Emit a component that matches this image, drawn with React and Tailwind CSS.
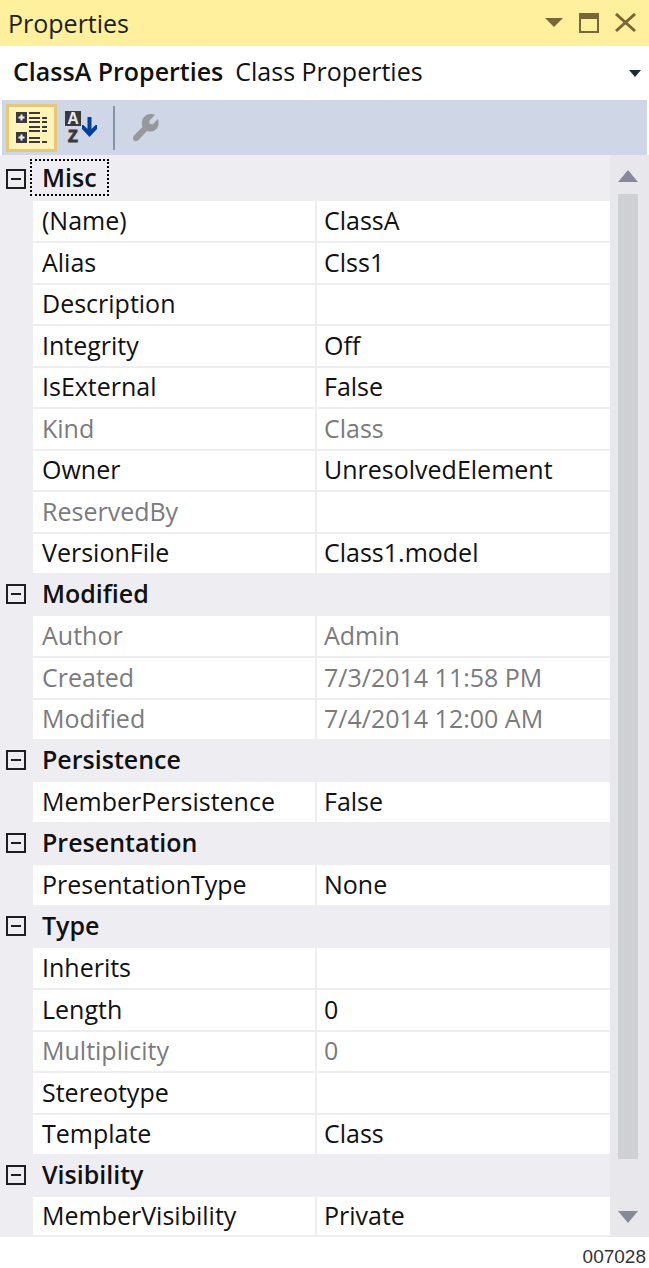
import React, { useState } from 'react';

const groups = [
  {
    name: 'Misc',
    items: [
      { name: '(Name)', value: 'ClassA' },
      { name: 'Alias', value: 'Clss1' },
      { name: 'Description', value: '' },
      { name: 'Integrity', value: 'Off' },
      { name: 'IsExternal', value: 'False' },
      { name: 'Kind', value: 'Class', readOnly: true },
      { name: 'Owner', value: 'UnresolvedElement' },
      { name: 'ReservedBy', value: '', readOnly: true },
      { name: 'VersionFile', value: 'Class1.model' },
    ],
  },
  {
    name: 'Modified',
    items: [
      { name: 'Author', value: 'Admin', readOnly: true },
      { name: 'Created', value: '7/3/2014 11:58 PM', readOnly: true },
      { name: 'Modified', value: '7/4/2014 12:00 AM', readOnly: true },
    ],
  },
  { name: 'Persistence', items: [{ name: 'MemberPersistence', value: 'False' }] },
  { name: 'Presentation', items: [{ name: 'PresentationType', value: 'None' }] },
  {
    name: 'Type',
    items: [
      { name: 'Inherits', value: '' },
      { name: 'Length', value: '0' },
      { name: 'Multiplicity', value: '0', readOnly: true },
      { name: 'Stereotype', value: '' },
      { name: 'Template', value: 'Class' },
    ],
  },
  { name: 'Visibility', items: [{ name: 'MemberVisibility', value: 'Private' }] },
];

const TitleBar = () => (
  <header className="flex h-[46px] items-center bg-[#fff09d] pl-2 pr-3 text-[#1e1e1e]">
    <h1 className="flex-1">Properties</h1>
    <div className="flex items-center gap-4 text-[#7a6536]">
      <button type="button" aria-label="Window position">
        <svg width="18" height="20" viewBox="0 0 18 20" fill="currentColor">
          <path d="M0 5h18L9 14z" />
        </svg>
      </button>
      <button type="button" aria-label="Maximize">
        <svg width="20" height="20" viewBox="0 0 20 20" fill="currentColor" fillRule="evenodd">
          <path d="M0 0h20v20H0zM2 6v12h16V6z" />
        </svg>
      </button>
      <button type="button" aria-label="Close">
        <svg width="22" height="20" viewBox="0 0 22 20" fill="none" stroke="currentColor" strokeWidth="3">
          <path d="M1 1l19 17M20 1L1 18" />
        </svg>
      </button>
    </div>
  </header>
);

const ObjectPicker = () => (
  <div className="relative flex h-[54px] items-center bg-white pl-[13px] pr-2">
    <label htmlFor="object" className="flex flex-1 gap-3 pb-1">
      <span className="font-semibold">ClassA Properties</span>
      <span>Class Properties</span>
    </label>
    <svg width="12" height="7" viewBox="0 0 12 7" fill="#1b293e">
      <path d="M0 0h12L6 7z" />
    </svg>
    <select id="object" className="absolute inset-0 h-full w-full opacity-0">
      <option>ClassA Properties</option>
    </select>
  </div>
);

const Toolbar = ({ sorted, onSort }) => (
  <div className="mx-[2px] flex h-[55px] items-center bg-[#cfd6e5] pl-1">
    <button
      type="button"
      aria-label="Categorized"
      aria-pressed={!sorted}
      onClick={() => onSort(false)}
      className="flex h-12 w-[51px] items-center justify-center border-3 border-[#e5c977] bg-[#fff3b8]"
    >
      <svg width="32" height="32" viewBox="0 0 32 32" fill="#3a3a3c">
        <path d="M0 0h11v11H0zM0 20h11v11H0z" />
        <path
          d="M4.500 2.500h2v2h2v2h-2v2h-2v-2h-2v-2h2zM4.500 22.500h2v2h2v2h-2v2h-2v-2h-2v-2h2z"
          fill="#f0f0f2"
        />
        <path d="M13 0h11v2H13zM13 5h11v2H13zM13 9h11v2H13zM13 14h11v2H13zM13 18h11v2H13zM13 25h11v2H13zM13 29h11v2H13z" />
        <path d="M26 5h5v2h-5zM26 9h5v2h-5zM26 14h5v2h-5zM26 18h5v2h-5zM26 29h5v2h-5z" />
      </svg>
    </button>
    <button
      type="button"
      aria-label="Alphabetical"
      aria-pressed={sorted}
      onClick={() => onSort(true)}
      className="ml-2 flex h-12 w-8 items-center"
    >
      <svg
        width="32"
        height="40"
        viewBox="0 -3 32 40"
        className="font-['Liberation_Sans',sans-serif] text-[16px] font-bold"
      >
        <path d="M0 0h16v15H0z" fill="#3a3a3c" />
        <text x="8" y="13" textAnchor="middle" fill="#e8ebf2">
          A
        </text>
        <text x="8" y="31" textAnchor="middle" fill="#3a3a3c" stroke="#3a3a3c">
          Z
        </text>
        <path d="M22.500 6h4v12l4-4h1.500v4l-7.500 8-7.500-8v-4h1.500l4 4z" fill="#00409c" />
      </svg>
    </button>
    <div className="ml-4 h-11 w-[2px] bg-[#8593a8]" />
    <button type="button" aria-label="Property pages" disabled className="ml-4 flex h-12 items-center">
      <svg width="28" height="28" viewBox="0 0 28 28" fill="#97989c">
        <path d="M14 2c3-2.500 7-2.500 10-1l-5.500 5.500v3l3 1L27 5c2 6-1 12-7 12.500-1.500 0-3 0-4-.5l-8.500 9c-3 3-7.500-.5-4.500-4.500l8.500-8.500C10 9 11 4.500 14 2z" />
      </svg>
    </button>
  </div>
);

const ToggleIcon = ({ open }) => (
  <svg width="20" height="20" viewBox="0 0 20 20" fill="none" stroke="#1e1e1e" strokeWidth="2">
    <path d="M1 1h18v18H1zM5 10h10" />
    {!open && <path d="M10 5v10" />}
  </svg>
);

const PropertyGrid = ({ sorted }) => {
  const [closed, setClosed] = useState([]);

  const toggle = (name) =>
    setClosed(closed.includes(name) ? closed.filter((n) => n !== name) : [...closed, name]);

  const rows = sorted
    ? groups.flatMap((g) => g.items).sort((a, b) => a.name.localeCompare(b.name))
    : groups.flatMap((g) => [{ name: g.name, group: true }, ...(closed.includes(g.name) ? [] : g.items)]);

  return (
    <table className="w-full flex-1 table-fixed border-collapse text-left">
      <colgroup>
        <col className="w-[33px]" />
        <col className="w-[283px]" />
        <col />
      </colgroup>
      <tbody>
        {rows.map((row, i) =>
          row.group ? (
            <tr key={`group-${row.name}`} className="odd:h-[42px] even:h-[41px]">
              <td className="p-0 pb-[3px] pl-[6px]">
                <button
                  type="button"
                  aria-label={`Toggle ${row.name}`}
                  onClick={() => toggle(row.name)}
                  className="block"
                >
                  <ToggleIcon open={!closed.includes(row.name)} />
                </button>
              </td>
              <th colSpan={2} scope="colgroup" className="p-0 pb-[5px] font-semibold">
                <span
                  className={
                    i === 0
                      ? '-ml-[3px] block w-fit border-2 border-dotted border-black px-[10px] leading-[33px]'
                      : 'block pl-[9px]'
                  }
                >
                  {row.name}
                </span>
              </th>
            </tr>
          ) : (
            <tr
              key={row.name}
              className={`odd:h-[42px] even:h-[41px] last:h-[39px]! ${row.readOnly ? 'text-[#7b7b7d]' : ''}`}
            >
              <td className="p-0" />
              <th
                scope="row"
                className="border-b-2 border-r-2 border-[#eeeef2] bg-white p-0 pb-[3px] pl-[9px] font-normal"
              >
                {row.name}
              </th>
              <td className="border-b-2 border-[#eeeef2] bg-white p-0 pb-[3px] pl-[7px]">{row.value}</td>
            </tr>
          )
        )}
      </tbody>
    </table>
  );
};

const ScrollBar = () => (
  <div className="flex w-[39px] flex-col items-center bg-[#e8e8ec] pr-[3px] pt-[15px] pb-[14px]">
    <svg width="20" height="12" viewBox="0 0 20 12" fill="#868999">
      <path d="M0 12h20L10 0z" />
    </svg>
    <div className="mt-3 mb-[52px] w-5 flex-1 bg-[#cfd0d4]" />
    <svg width="20" height="12" viewBox="0 0 20 12" fill="#868999">
      <path d="M0 0h20L10 12z" />
    </svg>
  </div>
);

const App = () => {
  const [sorted, setSorted] = useState(false);

  return (
    <main className="bg-white font-['Open_Sans',sans-serif] text-[25px] leading-8 text-[#111]">
      <TitleBar />
      <ObjectPicker />
      <Toolbar sorted={sorted} onSort={setSorted} />
      <section className="flex bg-[#eeeef2]">
        <div className="flex flex-1 pt-1">
          <PropertyGrid sorted={sorted} />
        </div>
        <ScrollBar />
      </section>
      <footer className="pr-[3px] pt-[6px] text-right font-['Liberation_Sans',sans-serif] text-[19px] leading-7 text-[#333]">
        007028
      </footer>
    </main>
  );
};

export default App;
